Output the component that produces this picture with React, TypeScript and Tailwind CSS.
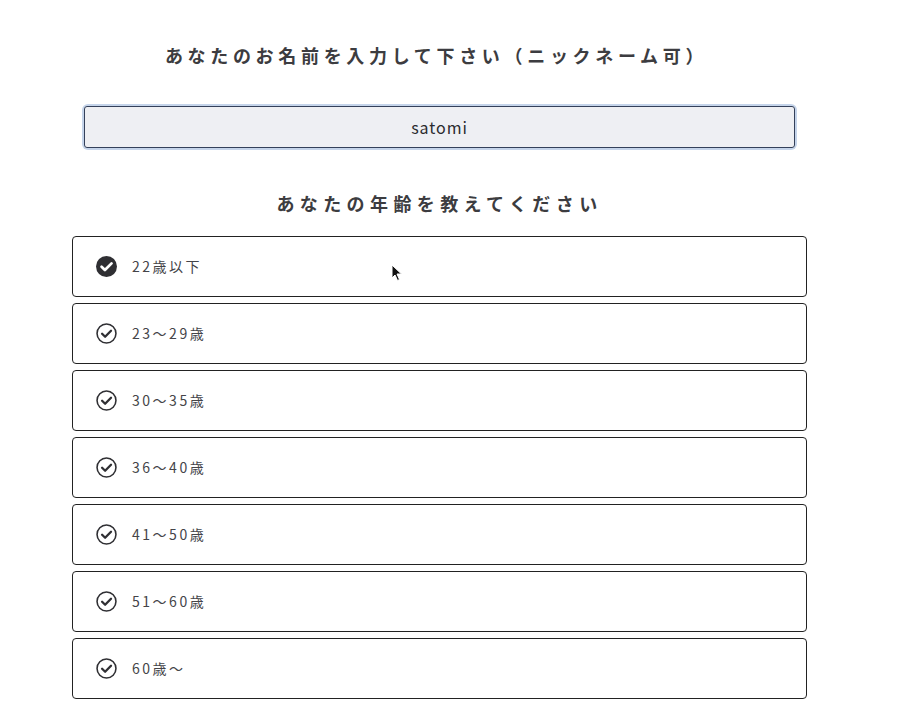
import { useState } from "react";

const AGES = ["22歳以下", "23〜29歳", "30〜35歳", "36〜40歳", "41〜50歳", "51〜60歳", "60歳〜"];

function CheckIcon({ filled }: { filled: boolean }) {
  if (filled) {
    return (
      <svg width="21" height="21" viewBox="0 0 20 20">
        <circle cx="10" cy="10" r="10" fill="#2f2f33" />
        <path d="M5.3 10.2l3.2 3.2 6.3-6.4" fill="none" stroke="#fff" strokeWidth="2.6" strokeLinecap="round" strokeLinejoin="round" />
      </svg>
    );
  }
  return (
    <svg width="21" height="21" viewBox="0 0 20 20">
      <circle cx="10" cy="10" r="9" fill="none" stroke="#2f2f33" strokeWidth="1.5" />
      <path d="M5.8 10.2l2.9 2.9 5.6-5.7" fill="none" stroke="#2f2f33" strokeWidth="2.2" strokeLinecap="round" strokeLinejoin="round" />
    </svg>
  );
}

export default function App() {
  const [name, setName] = useState("satomi");
  const [age, setAge] = useState(AGES[0]);

  return (
    <div
      className="relative min-h-[728px] w-[902px] bg-white text-[#3a3a3e]"
      style={{ fontFamily: '"Noto Sans CJK JP", "Noto Sans", sans-serif' }}
    >
      <div className="ml-[72px] w-[735px] pt-[42px]">
        <h2 className="pr-[6px] text-center text-[18px] font-bold leading-[26px] tracking-[0.26em] text-[#3c3c40]">
          あなたのお名前を入力して下さい（ニックネーム可）
        </h2>

        <div className="mx-[12px] mt-[38px] rounded-[4px] ring-2 ring-[#c5d4ea]">
          <input
            value={name}
            onChange={(e) => setName(e.target.value)}
            className="block h-[42px] w-full rounded-[3px] border border-[#34405a] bg-[#eeeff3] text-center text-[16px] tracking-[0.06em] text-[#2a2a2e] outline-none"
          />
        </div>

        <h2 className="mt-[42px] text-center text-[18px] font-bold leading-[26px] tracking-[0.3em] text-[#3c3c40]">
          あなたの年齢を教えてください
        </h2>

        <div className="mt-[20px] flex flex-col gap-[6px]">
          {AGES.map((item) => (
            <button
              key={item}
              type="button"
              onClick={() => setAge(item)}
              className="flex h-[61px] items-center gap-[15px] rounded-[4px] border border-[#222] bg-white pl-[23px] text-left"
            >
              <CheckIcon filled={age === item} />
              <span className="text-[14px] tracking-[0.18em] text-[#444448]">{item}</span>
            </button>
          ))}
        </div>
      </div>

      {/* mouse pointer */}
      <svg className="pointer-events-none absolute left-[391px] top-[264px]" width="12" height="18" viewBox="0 0 12 18">
        <path d="M1 1v13l3-3 2.5 5.5 2-1L6 10h4.5z" fill="#111" stroke="#fff" strokeWidth="1" />
      </svg>
    </div>
  );
}
